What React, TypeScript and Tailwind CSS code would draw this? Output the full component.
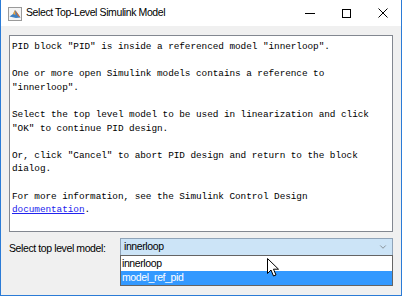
import { ChevronDown } from "lucide-react";

const lines: (string | null)[] = [
  'PID block "PID" is inside a referenced model "innerloop".',
  null,
  "One or more open Simulink models contains a reference to",
  '"innerloop".',
  null,
  "Select the top level model to be used in linearization and click",
  '"OK" to continue PID design.',
  null,
  'Or, click "Cancel" to abort PID design and return to the block',
  "dialog.",
  null,
  "For more information, see the Simulink Control Design",
];

const MatlabIcon = () => (
  <svg width="14" height="14" viewBox="0 0 14 14">
    <rect x="0.5" y="0.5" width="13" height="13" fill="#f4f4f4" stroke="#9a9a9a" />
    <path d="M1.5 9.5 L5 7 L7 3 L9 5.5 L12.5 10.5 L8 11 Z" fill="#3f7fc0" />
    <path d="M7 3 L9 5.5 L12.5 10.5 L10 9 Z" fill="#e86b1f" />
    <path d="M5 7 L7 3 L7.5 8 Z" fill="#f3a23a" />
  </svg>
);

const Cursor = () => (
  <svg width="13" height="20" viewBox="0 0 13 20" className="absolute left-[147px] top-[20px]">
    <path
      d="M0.5 0.5 L0.5 15.5 L4 12 L6.5 18 L9 17 L6.5 11.2 L11.5 11.2 Z"
      fill="#ffffff"
      stroke="#000000"
      strokeWidth="1"
      strokeLinejoin="miter"
    />
  </svg>
);

export default function App() {
  return (
    <div className="w-[402px] h-[296px] flex flex-col bg-white border border-t-0 border-[#2b7bd6] overflow-hidden font-['Liberation_Sans',Arial,sans-serif]">
      {/* title bar */}
      <div className="h-[26px] flex items-center bg-white">
        <div className="ml-[7px] mt-[1px]">
          <MatlabIcon />
        </div>
        <span className="ml-[4px] text-[10.5px] text-black tracking-[-0.4px]">Select Top-Level Simulink Model</span>
        <div className="ml-auto flex items-center h-full">
          <div className="w-[37px] h-full flex items-center justify-center">
            <div className="w-[10px] h-px bg-black" />
          </div>
          <div className="w-[37px] h-full flex items-center justify-center">
            <div className="w-[9px] h-[9px] border border-black" />
          </div>
          <div className="w-[36px] h-full flex items-center justify-center">
            <svg width="10" height="10" viewBox="0 0 10 10">
              <path d="M0.5 0.5 L9.5 9.5 M9.5 0.5 L0.5 9.5" stroke="#000" strokeWidth="1" />
            </svg>
          </div>
        </div>
      </div>

      {/* body */}
      <div className="flex-1 bg-[#f0f0f0] pl-[8px] pr-[8px] pt-[9px]">
        <div className="h-[197px] bg-white border border-[#828790] pl-[2px] pt-[4px] font-['Liberation_Mono',monospace] text-[9.4px] tracking-[-0.05px] leading-[13.6px] text-black">
          {lines.map((l, i) =>
            l === null ? (
              <div key={i} className="h-[13.6px]" />
            ) : (
              <div key={i} className="whitespace-pre">
                {l}
              </div>
            )
          )}
          <div>
            <span className="text-[#2222ee] underline">documentation</span>.
          </div>
        </div>

        <div className="mt-[6px] flex items-start text-[10.5px] tracking-[-0.4px] text-black">
          <span className="w-[111px] pt-[3px]">Select top level model:</span>
          <div className="relative flex-1">
            <div className="h-[18px] bg-[#cce4f7] border border-[#8fa3b8] flex items-center pl-[3px] pr-[4px]">
              <span>innerloop</span>
              <ChevronDown className="ml-auto w-[10px] h-[10px] text-[#606060]" strokeWidth={1.5} />
            </div>
            <div className="absolute left-0 right-0 top-[17px] border border-[#646464] bg-white">
              <div className="h-[15px] pl-[1px] flex items-center">innerloop</div>
              <div className="h-[14px] pl-[1px] flex items-center bg-[#3399ff] text-white">model_ref_pid</div>
            </div>
            <Cursor />
          </div>
        </div>
      </div>
    </div>
  );
}
